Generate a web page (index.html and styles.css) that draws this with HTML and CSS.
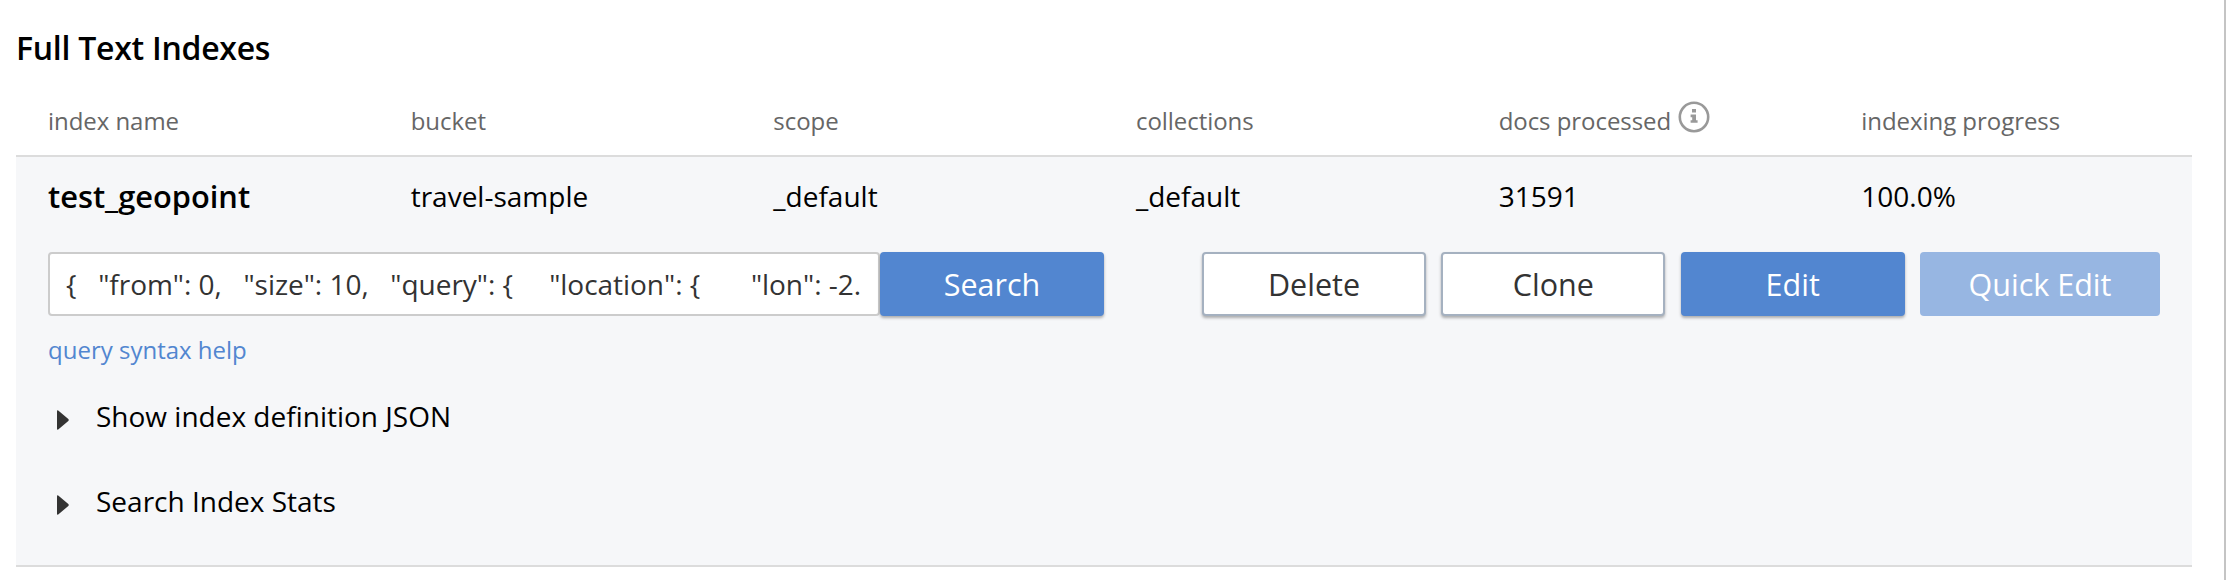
FILE: index.html
```
<!DOCTYPE html>
<html lang="en">
<head>
<meta charset="utf-8">
<title>Full Text Indexes</title>
<link rel="stylesheet" href="styles.css">
</head>
<body>
<main class="page">
  <h1 class="title">Full Text Indexes</h1>
  <div class="row header">
    <span>index name</span>
    <span>bucket</span>
    <span>scope</span>
    <span>collections</span>
    <span class="with-icon">docs processed
      <svg class="info" viewBox="0 0 32 32"><circle cx="16" cy="16" r="14.2" fill="none" stroke="#999" stroke-width="2.6"/><path fill="#999" d="M14 8h4v3.6h-4zM12.6 13.6H18v5.6h1.6v2.6h-7v-2.6h1.6v-3h-1.6z"/></svg>
    </span>
    <span>indexing progress</span>
  </div>
  <section class="panel">
    <div class="row values">
      <strong class="name">test_geopoint</strong>
      <span>travel-sample</span>
      <span>_default</span>
      <span>_default</span>
      <span>31591</span>
      <span>100.0%</span>
    </div>
    <div class="actions">
      <div class="query"><span class="query-text">{   "from": 0,   "size": 10,   "query": {     "location": {       "lon": -2.</span></div>
      <button class="btn primary">Search</button>
      <div class="group">
        <button class="btn outline">Delete</button>
        <button class="btn outline">Clone</button>
        <button class="btn primary">Edit</button>
        <button class="btn primary wide" disabled>Quick Edit</button>
      </div>
    </div>
    <a class="help">query syntax help</a>
    <div class="disclosure"><svg class="caret" viewBox="0 0 12 20"><path d="M0 1.2Q0 0 1.2 .5L11.3 9q.9 1 0 2L1.2 19.5Q0 20 0 18.8z" fill="#333"/></svg><span>Show index definition JSON</span></div>
    <div class="disclosure"><svg class="caret" viewBox="0 0 12 20"><path d="M0 1.2Q0 0 1.2 .5L11.3 9q.9 1 0 2L1.2 19.5Q0 20 0 18.8z" fill="#333"/></svg><span>Search Index Stats</span></div>
  </section>
</main>
</body>
</html>
```
FILE: styles.css
```
* { box-sizing: border-box; }
body { margin: 0; background: #fff; color: #000; font-family: "Open Sans", "Noto Sans", sans-serif; }
.page { height: 580px; padding: 23px 32px 0 16px; border-right: 2px solid #c4c4c4; overflow: hidden; }
.title { margin: 0; height: 50px; line-height: 50px; font-size: 32px; font-weight: 600; letter-spacing: -.27px; }
.row { display: grid; grid-template-columns: repeat(6, 362.67px); padding-left: 32px; white-space: nowrap; }
.header { height: 82px; padding-top: 30px; line-height: 36px; font-size: 24px; letter-spacing: -.05px; color: #666; }
.with-icon { display: flex; gap: 7px; }
.info { width: 32px; height: 32px; margin-top: -2px; }
.panel { height: 412px; background: #f6f7f9; border-top: 2px solid #dcdcdc; border-bottom: 2px solid #dcdcdc; }
.values { height: 95px; padding-top: 19px; line-height: 40px; font-size: 28px; }
.name { font-size: 30.8px; font-weight: 600; }
.actions { display: flex; padding: 0 32px; height: 64px; }
.query { width: 832px; height: 64px; padding: 0 16px; border: 2px solid #ccc; border-radius: 4px; background: #fff; line-height: 60px; font-size: 28px; letter-spacing: -.03px; color: #333; white-space: pre; overflow: hidden; }
.btn { width: 224px; height: 64px; padding: 0; border: 0; border-radius: 4px; font: 400 30.5px "Open Sans", "Noto Sans", sans-serif; box-shadow: 0 2px 3px rgba(0, 0, 0, .3); }
.primary { background: #5286d0; color: #fff; }
.outline { background: #fff; color: #333; border: 2px solid #a5b1c0; }
.group { display: flex; gap: 15.33px; margin-left: auto; }
.wide { width: 240px; }
.btn:disabled { background: #97b6e2; box-shadow: none; }
.help { display: block; margin: 16px 0 0 32px; height: 36px; line-height: 36px; font-size: 24px; color: #5286d0; }
.disclosure { display: flex; align-items: center; height: 40px; margin-top: 28px; padding-left: 41px; font-size: 28px; line-height: 40px; }
.disclosure + .disclosure { margin-top: 45px; }
.caret { width: 12px; height: 20px; margin: 7px 27px 0 0; }
```
